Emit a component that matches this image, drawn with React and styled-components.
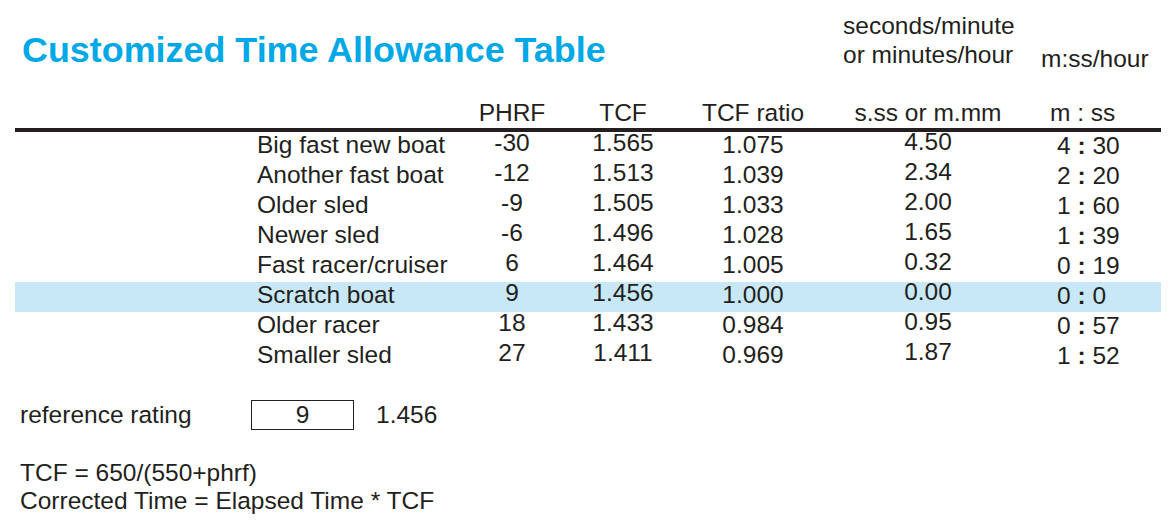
import React from "react";
import styled, { createGlobalStyle } from "styled-components";

const Global = createGlobalStyle`
  html, body { margin: 0; padding: 0; background: #ffffff; }
  body { font-family: "Liberation Sans", Arial, sans-serif; color: #231f20; }
`;

const COLS = "242px 205px 100px 122px 138px 212px 127px";

const Page = styled.div`
  width: 1174px;
  height: 524px;
  box-sizing: border-box;
  padding-left: 15px;
  overflow: hidden;
  font-size: 24.5px;
`;

const TopBar = styled.div`
  display: grid;
  grid-template-columns: ${COLS};
  align-items: start;
  height: 98px;
  width: 1146px;
`;

const Title = styled.h1`
  grid-column: 1 / span 5;
  margin: 0;
  padding: 30px 0 0 7px;
  font-size: 35.9px;
  line-height: 40px;
  font-weight: 700;
  color: #00a8e6;
  white-space: nowrap;
`;

const UnitLabel = styled.div`
  padding-top: ${(p) => p.$top}px;
  padding-left: ${(p) => p.$left}px;
  line-height: 29px;
  white-space: nowrap;
`;

const Table = styled.div`
  width: 1146px;
`;

const HeadRow = styled.div`
  display: grid;
  grid-template-columns: ${COLS};
  height: 30px;
  line-height: 29px;
  border-bottom: 4px solid #231f20;
`;

const HeadCell = styled.div`
  text-align: ${(p) => p.$align || "center"};
  padding-left: ${(p) => p.$pad || 0}px;
  white-space: nowrap;
`;

const Row = styled.div`
  display: grid;
  grid-template-columns: ${COLS};
  align-items: start;
  height: 30px;
  background: ${(p) => (p.$highlight ? "#c8e8f7" : "transparent")};
`;

const Cell = styled.div`
  line-height: 18px;
  padding-top: ${(p) => p.$dy}px;
  padding-left: ${(p) => p.$pad || 0}px;
  text-align: ${(p) => p.$align || "center"};
  white-space: nowrap;
`;

const Colon = styled.span`
  font-weight: 700;
`;

const RefRow = styled.div`
  display: flex;
  align-items: center;
  height: 30px;
  margin-top: 28px;
  line-height: 30px;
`;

const RefLabel = styled.div`
  width: 236px;
  padding-left: 5px;
  box-sizing: border-box;
`;

const RefBox = styled.div`
  width: 103px;
  height: 30px;
  box-sizing: border-box;
  border: 1.5px solid #231f20;
  line-height: 27px;
  text-align: center;
`;

const RefValue = styled.div`
  margin-left: 22px;
`;

const Formulas = styled.div`
  margin-top: 29px;
  padding-left: 5px;
  line-height: 28px;
`;

const rows = [
  ["Big fast new boat", "-30", "1.565", "1.075", "4.50", "4", "30"],
  ["Another fast boat", "-12", "1.513", "1.039", "2.34", "2", "20"],
  ["Older sled", "-9", "1.505", "1.033", "2.00", "1", "60"],
  ["Newer sled", "-6", "1.496", "1.028", "1.65", "1", "39"],
  ["Fast racer/cruiser", "6", "1.464", "1.005", "0.32", "0", "19"],
  ["Scratch boat", "9", "1.456", "1.000", "0.00", "0", "0"],
  ["Older racer", "18", "1.433", "0.984", "0.95", "0", "57"],
  ["Smaller sled", "27", "1.411", "0.969", "1.87", "1", "52"],
];

export default function App() {
  return (
    <>
      <Global />
      <Page>
        <TopBar>
          <Title>Customized Time Allowance Table</Title>
          <UnitLabel $top={10.5} $left={21}>
            seconds/minute
            <br />
            or minutes/hour
          </UnitLabel>
          <UnitLabel $top={43.7} $left={7}>
            m:ss/hour
          </UnitLabel>
        </TopBar>
        <Table>
          <HeadRow>
            <HeadCell />
            <HeadCell />
            <HeadCell>PHRF</HeadCell>
            <HeadCell>TCF</HeadCell>
            <HeadCell>TCF ratio</HeadCell>
            <HeadCell>s.ss or m.mm</HeadCell>
            <HeadCell $align="left" $pad={16}>
              m : ss
            </HeadCell>
          </HeadRow>
          {rows.map((r) => (
            <Row key={r[0]} $highlight={r[0] === "Scratch boat"}>
              <Cell $dy={3.5} />
              <Cell $dy={3.5} $align="left">
                {r[0]}
              </Cell>
              <Cell $dy={2}>{r[1]}</Cell>
              <Cell $dy={2}>{r[2]}</Cell>
              <Cell $dy={4}>{r[3]}</Cell>
              <Cell $dy={0.5}>{r[4]}</Cell>
              <Cell $dy={4.5} $align="left" $pad={23}>
                {r[5]} <Colon>:</Colon> {r[6]}
              </Cell>
            </Row>
          ))}
        </Table>
        <RefRow>
          <RefLabel>reference rating</RefLabel>
          <RefBox>9</RefBox>
          <RefValue>1.456</RefValue>
        </RefRow>
        <Formulas>
          TCF = 650/(550+phrf)
          <br />
          Corrected Time = Elapsed Time * TCF
        </Formulas>
      </Page>
    </>
  );
}
